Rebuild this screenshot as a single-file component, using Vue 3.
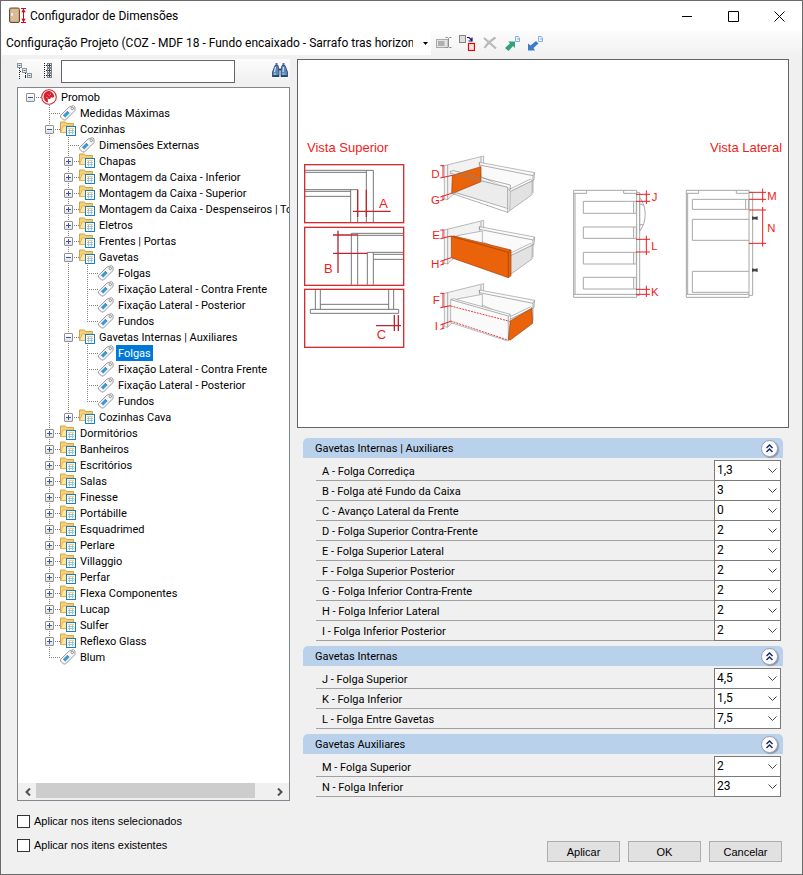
<template>
  <div class="window">
    <header class="titlebar">
      <svg class="app-icon" viewBox="0 0 18 18">
        <rect x="0.5" y="1" width="10" height="14.5" rx="1.5" fill="#c9a980" stroke="#6b4c2c" />
        <rect x="2" y="2" width="7" height="12" fill="#dcc5a4" opacity=".7" />
        <path d="M3 6v3" stroke="#fff" stroke-width="1.4" />
        <path d="M12 1.5h5M12 15.5h5M14.5 2v13" stroke="#e00016" fill="none" />
        <path d="M12.2 5.2 14.5 2l2.3 3.2zM12.2 11.8l2.3 3.2 2.3-3.2z" fill="#e00016" />
      </svg>
      <h1>Configurador de Dimensões</h1>
      <div class="window-buttons">
        <button aria-label="Minimizar"><svg viewBox="0 0 11 11"><path d="M0 5.5h10" /></svg></button>
        <button aria-label="Maximizar"><svg viewBox="0 0 11 11"><path d="M.5.5h10v10H.5z" /></svg></button>
        <button aria-label="Fechar"><svg viewBox="0 0 11 11"><path d="M.5.5l10 10M10.5.5l-10 10" /></svg></button>
      </div>
    </header>

    <div class="toolbar">
      <div class="project">
        <select v-model="project" aria-label="Configuração">
          <option>{{ project }}</option>
        </select>
        <svg class="caret" viewBox="0 0 5 3"><path d="M0 0h5L2.5 3z" /></svg>
      </div>
      <button class="tool" aria-label="Renomear" disabled>
        <svg viewBox="0 0 16 16">
          <rect x=".5" y="4.5" width="11.5" height="8" fill="#e4e4e4" stroke="#a9a9a9" />
          <rect x="2" y="6" width="6.5" height="5" fill="#b0b0b0" />
          <path d="M9.5 2.5h2l1 1 1-1h2M12.5 3.5v8M9.5 12.5h2l1-1 1 1h2" fill="none" stroke="#8c8c8c" />
        </svg>
      </button>
      <button class="tool" aria-label="Copiar">
        <svg viewBox="0 0 16 16">
          <rect x=".5" y=".5" width="6" height="7" fill="#dedede" stroke="#8a8080" />
          <path d="M8 2.5h2l2.5 2.5M13 2.5v3.5H9.5" fill="none" stroke="#10106e" stroke-width="1.2" />
          <rect x="9.5" y="8.5" width="6" height="7" fill="#e6e6e6" stroke="#f00000" stroke-width="1.2" />
        </svg>
      </button>
      <button class="tool" aria-label="Excluir" disabled>
        <svg viewBox="0 0 16 16"><path d="M2 3l12 10.5M13.5 2.5C8 6 5 9 2.5 13" fill="none" stroke="#bababa" stroke-width="2.3" /></svg>
      </button>
      <button class="tool" aria-label="Exportar">
        <svg viewBox="0 0 16 16">
          <path d="M0 13 5 8.3 3 6.5h7V13L8 11l-4.5 5z" fill="#30a27a" />
          <path d="M10.5 1.500h2.700l1.300 1.300v3.700h-4z" fill="#eef5fc" stroke="#86aed6" />
          <path d="M12 4h2" stroke="#86aed6" />
        </svg>
      </button>
      <button class="tool" aria-label="Importar">
        <svg viewBox="0 0 16 16">
          <path d="M8 6l2.5 2.5L5.500 13 7 15.500H0V8.500L2.500 10.500z" fill="#3b7cc9" />
          <path d="M10.5 1.500h2.700l1.300 1.300v3.700h-4z" fill="#eef5fc" stroke="#86aed6" />
          <path d="M12 4h2" stroke="#86aed6" />
        </svg>
      </button>
    </div>

    <main class="content">
      <section class="sidebar">
        <div class="search-bar">
          <button class="tool" aria-label="Recolher tudo">
            <svg viewBox="0 0 16 16">
              <path d="M2.5 5v11M3 8.5h2M8.5 10v5M8 13.5h2" fill="none" stroke="#222" stroke-dasharray="1 1" />
              <g fill="#e9eef2" stroke="#8595a0">
                <rect x=".5" y=".5" width="4" height="4" /><rect x="5.5" y="5.5" width="4" height="4" /><rect x="10.5" y="10.5" width="4" height="4" />
              </g>
              <path d="M1.5 2.5h2M6.5 7.5h2M11.5 12.5h2" stroke="#53636e" />
            </svg>
          </button>
          <button class="tool" aria-label="Expandir tudo">
            <svg viewBox="0 0 16 16">
              <path d="M1.5 0v16M3 2.5h2M3 7.5h2M3 12.5h2" stroke="#222" stroke-dasharray="1 1" />
              <g fill="#e9eef2" stroke="#7d858c">
                <rect x="4.5" y=".5" width="4" height="4" /><rect x="4.5" y="5.5" width="4" height="4" /><rect x="4.5" y="10.5" width="4" height="4" />
              </g>
              <path d="M5 2.5h3M6.5 1v3M5 7.5h3M6.5 6v3M5 12.5h3M6.5 11v3" stroke="#444" />
            </svg>
          </button>
          <input v-model="search" type="text" aria-label="Pesquisar" />
          <button class="tool find" aria-label="Localizar">
            <svg viewBox="0 0 16 16">
              <path d="M3 2.5h3l1 4.500v6.500H.5V9z" fill="#5b86b8" stroke="#1f3f6c" stroke-width=".8" />
              <path d="M10 2.5h3l2.500 6.500v4.500H9V7z" fill="#5b86b8" stroke="#1f3f6c" stroke-width=".8" />
              <path d="M3.5 1h2M10.500 1h2M6.500 6.500h3" stroke="#1f3f6c" stroke-width="1.5" />
              <path d="M3.5 4 2.500 9M11.500 4l-.5 5M2 11h2M10.500 11h2" stroke="#d5e5f5" stroke-width="1.2" />
              <path d="M.5 13h6.500M9 13h6.500" stroke="#203e69" stroke-width="1.5" />
            </svg>
          </button>
        </div>

        <div class="tree">
          <div class="tree-body" role="tree">
            <div v-for="row in rows" :key="row.key" class="tree-row" role="treeitem">
              <span v-for="(line, i) in row.guides" :key="i" :class="['guide', { line }]"></span>
              <span :class="['guide', 'own', { line: row.depth > 0, last: row.last }]">
                <button v-if="row.sign" class="toggle" :aria-label="row.sign === '+' ? 'Expandir' : 'Recolher'">
                  <svg viewBox="0 0 9 9">
                    <path d="M2 4.5h5" /><path v-if="row.sign === '+'" d="M4.5 2v5" />
                  </svg>
                </button>
              </span>
              <svg v-if="row.icon === 'root'" class="node-icon" viewBox="0 0 16 16">
                <circle cx="8" cy="8" r="7.3" fill="#fff" stroke="#d5222c" stroke-width="1.1" />
                <path d="M7.500 2C4.500 2.300 2.500 4.500 2.500 7.500c0 3 1.700 5.200 4.500 6l-.3-4 2.300.8 1-2 2 .5 1.200-1.300C13 4.500 10.500 2 7.500 2z" fill="#d5222c" />
                <path d="M7 5.500 8.500 7M5 8.500h1.500M9.500 4.500v1.500" stroke="#fff" stroke-width=".5" />
              </svg>
              <svg v-else-if="row.icon === 'folder'" class="node-icon" viewBox="0 0 16 16">
                <path d="M.5 11.5V1h5l1 1.500h7v9z" fill="#f6d07a" stroke="#d8a044" />
                <path d="M.7 11.5 3 5h10.500v6.500z" fill="#ffe7a6" stroke="#dfae54" stroke-width=".8" />
                <rect x="6.5" y="5.5" width="9" height="9" fill="#fff" stroke="#1b80b8" />
                <path d="M8 7.5h6" stroke="#f5cf80" />
                <path d="M8 9.5h6M8 11.500h6M9.500 8v5.500M12.500 8v5.500" stroke="#8dbbe0" stroke-width=".8" />
              </svg>
              <svg v-else class="node-icon" viewBox="0 0 16 16">
                <path d="M9 2l4.5-1.300L15 2v3.500L5.500 15h-2L.5 12v-1.500z" fill="#f7f7f7" stroke="#9a9a9a" />
                <circle cx="12.3" cy="3.5" r="1.2" fill="#fff" stroke="#777" stroke-width=".8" />
                <path d="M4.3 11.2 8.3 7.2" stroke="#3a9bd8" stroke-width="3.2" />
                <path d="M3.2 10.1l2.2 2.2M7.2 6.1l2.2 2.2" stroke="#1d699f" stroke-width=".6" />
              </svg>
              <span :class="['node-label', { selected: row.selected }]">{{ row.label }}</span>
            </div>
          </div>
          <div class="scrollbar">
            <button aria-label="Rolar para a esquerda"><svg viewBox="0 0 6 8"><path d="M5 .5 1.5 4 5 7.5" /></svg></button>
            <div class="track"><div class="thumb"></div></div>
            <button aria-label="Rolar para a direita"><svg viewBox="0 0 6 8"><path d="M1 .5 4.5 4 1 7.5" /></svg></button>
          </div>
        </div>

        <div class="checks">
          <label><input v-model="applySelected" type="checkbox" />Aplicar nos itens selecionados</label>
          <label><input v-model="applyExisting" type="checkbox" />Aplicar nos itens existentes</label>
        </div>
      </section>

      <section class="details">
        <div class="preview">
          <svg viewBox="3 3 1470 1101">
            <g transform="translate(0 213)">
              <text x="30" y="66" font-size="39">Vista Superior</text>

              <!-- top view details -->
              <g class="gray">
                <path d="M24 121h205v156M24 127h184M208 121v156M24 179h158v98M24 184h137M24 199h137M161 179v98" />
                <path d="M163 464V310h156M182 310v154M182 316h137M211 464V367h108M229 367v97M229 373h90M229 388h90" />
                <path d="M40 538h265v12H40zM55 479v59M70 479v59M275 479v59M290 479v59M70 523h205" />
              </g>
              <g class="frame">
                <rect x="23" y="104" width="297" height="174" />
                <rect x="23" y="292" width="297" height="174" />
                <rect x="23" y="478" width="297" height="174" />
              </g>
              <g class="dark-red">
                <path d="M168 244h113M182 179v82M208 179v82" />
                <path d="M108 315h74M108 370h103M123 302v127" />
                <path d="M237 587h75M292 555v48M304 555v48" />
              </g>
              <text x="246" y="233" font-size="40">A</text>
              <text x="81" y="430" font-size="39">B</text>
              <text x="239" y="627" font-size="39">C</text>

              <!-- drawer, repeated once per measured part -->
              <g v-for="drawer in drawers" :key="drawer.part" :transform="`translate(0 ${drawer.y})`">
                <path class="shade" d="M442 107 560 78v55L460 200l-8 9-10-2z" />
                <path class="edge" d="M452 105v104M552 82v47" />
                <!-- far wall, floor and right end -->
                <path class="panel" d="M547 97 713 128l-2 22-71 30-88-40z" />
                <path class="floor" d="M470 188 556 148l84 24-4 62z" />
                <path class="edge" d="M547 97v8l161 32v52M713 128l-5 9" />
                <path class="panel-dark" d="M640 184 706 152l-1 42-67 48z" />
                <path class="panel" d="M640 184l-5-5 66-32 5 5z" />
                <template v-if="drawer.part === 'back'">
                  <path class="orange" d="M466 136 552 110v45l-82 34-6 1z" />
                  <path class="edge" d="M460 124l10-2 170 43v15M460 124v6l172 42v76M464 190l168 57 6-5M470 186l164 50" />
                </template>
                <template v-else-if="drawer.part === 'side'">
                  <path class="panel" d="M480 124 556 110v38l-76 30z" />
                  <path class="orange" d="M463 126l8-1 171 42v77l-8 6-171-60z" />
                  <path class="orange-edge" d="M463 126 634 174l8-7M634 174v76" />
                </template>
                <template v-else>
                  <path class="panel" d="M480 124 556 110v38l-76 30z" />
                  <path class="panel" d="M461 126l8-3 171 47v72l-8 8-171-55z" />
                  <path class="edge" d="M461 126 634 175l6-5M634 175v74" />
                  <path class="orange" d="M640 190 704 152l3 45-67 50-6-1z" />
                  <path class="dashed" d="M461 145 638 191M461 190 632 247" />
                </template>
                <path class="measure" :d="drawer.measure" />
              </g>
              <text x="403" y="143" font-size="35">D</text>
              <text x="402" y="222" font-size="35">G</text>
              <text x="406" y="327" font-size="35">E</text>
              <text x="402" y="413" font-size="35">H</text>
              <text x="407" y="523" font-size="35">F</text>
              <text x="413" y="600" font-size="35">I</text>
            </g>

            <g transform="translate(750 213)">
              <text x="489" y="66" font-size="39">Vista Lateral</text>

              <!-- inner drawers cabinet -->
              <g class="cabinet">
                <path d="M80 181h189v321H80zM84 190v303M80 190h39v-9M230 181v9h39M80 493h189M269 187h9v309h-9" />
                <path d="M109 214h159v36H109zM109 291h159v34H109zM109 367h159v35H109zM109 442h159v35H109z" />
                <path d="M260 214v36M260 291v34M260 367v35M260 442v35" />
                <path d="M278 202c22 27 22 75 0 102V202M278 221l11 5M278 284h10" />
              </g>
              <!-- auxiliary drawers cabinet -->
              <g class="cabinet">
                <path d="M418 181h188v321H418zM422 190v303M418 190h37v-9M568 181v9h38M418 493h188M606 187h11v309h-11M606 341h11" />
                <path d="M436 208h169v30H436zM596 208v30M436 268h170M436 268v63h170M436 424h170M436 424v63h170" />
              </g>
              <path d="M615 259l8 2 9-2v11l-9-2-8 2zM615 415l8 2 9-2v11l-9-2-8 2z" fill="#444" />
              <g class="measure">
                <path d="M267 193h42M267 214h42M298 181v41M267 328h42M267 366h42M298 317v58M267 478h42M267 493h42M298 467v34" />
                <path d="M606 187h51M606 208h51M647 176v41M606 240h51M606 340h51M647 231v119" />
              </g>
              <text x="314" y="213" font-size="34">J</text>
              <text x="313" y="361" font-size="34">L</text>
              <text x="312" y="498" font-size="34">K</text>
              <text x="661" y="210" font-size="34">M</text>
              <text x="661" y="306" font-size="34">N</text>
            </g>
          </svg>
        </div>

        <div class="groups">
          <section v-for="(group, g) in groups" :key="group.title" class="group">
            <div class="group-header">
              <h2>{{ group.title }}</h2>
              <button class="collapse" aria-label="Recolher grupo">
                <svg viewBox="0 0 9 9"><path d="M1.5 4 4.5 1l3 3M1.5 8l3-3 3 3" /></svg>
              </button>
            </div>
            <div class="fields">
              <div v-for="(field, f) in group.fields" :key="field.label" class="field">
                <label :for="`field-${g}-${f}`">{{ field.label }}</label>
                <div class="combo">
                  <select :id="`field-${g}-${f}`" v-model="field.value">
                    <option>{{ field.value }}</option>
                  </select>
                  <svg class="chevron" viewBox="0 0 9 5"><path d="M.5.5l4 4 4-4" /></svg>
                </div>
              </div>
            </div>
          </section>
        </div>

        <footer class="actions">
          <button>Aplicar</button>
          <button>OK</button>
          <button>Cancelar</button>
        </footer>
      </section>
    </main>
  </div>
</template>

<script setup>
import { ref, computed } from 'vue'

const project = ref('Configuração Projeto (COZ - MDF 18 - Fundo encaixado - Sarrafo tras horizontal)')
const search = ref('')
const applySelected = ref(false)
const applyExisting = ref(false)

const leaf = (label, selected = false) => ({ label, icon: 'tag', selected })
const folder = (label, children = null) => ({ label, icon: 'folder', sign: children ? '-' : '+', children })

const tree = ref([
  {
    label: 'Promob',
    icon: 'root',
    sign: '-',
    children: [
      leaf('Medidas Máximas'),
      folder('Cozinhas', [
        leaf('Dimensões Externas'),
        folder('Chapas'),
        folder('Montagem da Caixa - Inferior'),
        folder('Montagem da Caixa - Superior'),
        folder('Montagem da Caixa - Despenseiros | To'),
        folder('Eletros'),
        folder('Frentes | Portas'),
        folder('Gavetas', [
          leaf('Folgas'),
          leaf('Fixação Lateral - Contra Frente'),
          leaf('Fixação Lateral - Posterior'),
          leaf('Fundos')
        ]),
        folder('Gavetas Internas | Auxiliares', [
          leaf('Folgas', true),
          leaf('Fixação Lateral - Contra Frente'),
          leaf('Fixação Lateral - Posterior'),
          leaf('Fundos')
        ]),
        folder('Cozinhas Cava')
      ]),
      folder('Dormitórios'),
      folder('Banheiros'),
      folder('Escritórios'),
      folder('Salas'),
      folder('Finesse'),
      folder('Portábille'),
      folder('Esquadrimed'),
      folder('Perlare'),
      folder('Villaggio'),
      folder('Perfar'),
      folder('Flexa Componentes'),
      folder('Lucap'),
      folder('Sulfer'),
      folder('Reflexo Glass'),
      leaf('Blum')
    ]
  }
])

// guides: one entry per ancestor, true while that ancestor still has siblings below
const flatten = (nodes, depth = 0, guides = [], path = '') =>
  nodes.flatMap((node, i) => {
    const last = i === nodes.length - 1
    const key = `${path}/${i}`
    const row = { ...node, key, depth, guides, last }
    return [row, ...flatten(node.children || [], depth + 1, [...guides, !last], key)]
  })

const rows = computed(() => flatten(tree.value))

const drawers = [
  { part: 'back', y: 0, measure: 'M438 107v37M430 107h12M430 144l36-8M438 196v15M430 201l34-11M430 212l12-4' },
  { part: 'side', y: 193, measure: 'M438 107v26M430 107h12M430 133l33-8M438 197v15M430 201l33-11M430 212l12-4' },
  { part: 'front', y: 383, measure: 'M438 107v43M430 107h12M430 150l31-6M438 197v17M430 202l31-11M430 215l12-4' }
]

const groups = ref([
  {
    title: 'Gavetas Internas | Auxiliares',
    fields: [
      { label: 'A - Folga Corrediça', value: '1,3' },
      { label: 'B - Folga até Fundo da Caixa', value: '3' },
      { label: 'C - Avanço Lateral da Frente', value: '0' },
      { label: 'D - Folga Superior Contra-Frente', value: '2' },
      { label: 'E - Folga Superior Lateral', value: '2' },
      { label: 'F - Folga Superior Posterior', value: '2' },
      { label: 'G - Folga Inferior Contra-Frente', value: '2' },
      { label: 'H - Folga Inferior Lateral', value: '2' },
      { label: 'I - Folga Inferior Posterior', value: '2' }
    ]
  },
  {
    title: 'Gavetas Internas',
    fields: [
      { label: 'J - Folga Superior', value: '4,5' },
      { label: 'K - Folga Inferior', value: '1,5' },
      { label: 'L - Folga Entre Gavetas', value: '7,5' }
    ]
  },
  {
    title: 'Gavetas Auxiliares',
    fields: [
      { label: 'M - Folga Superior', value: '2' },
      { label: 'N - Folga Inferior', value: '23' }
    ]
  }
])
</script>

<style>
body {
  margin: 0;
}
</style>

<style scoped>
.window {
  box-sizing: border-box;
  min-height: 100vh;
  display: flex;
  flex-direction: column;
  border: 1px solid #6a6a6a;
  background: #f0f0f0;
  color: #000;
  font: 11px/16px Roboto, "Liberation Sans", Arial, sans-serif;
}

button,
input,
select {
  font: inherit;
  color: inherit;
  margin: 0;
  padding: 0;
  border-radius: 0;
}

svg {
  display: block;
}

/* title bar */
.titlebar {
  display: flex;
  align-items: center;
  height: 30px;
  padding-left: 8px;
  background: #fff;
}

.app-icon {
  width: 18px;
  height: 18px;
  margin-right: 3px;
}

h1 {
  margin: 0;
  font: 12px/16px Roboto, "Open Sans", sans-serif;
}

.window-buttons {
  display: flex;
  align-self: stretch;
  margin-left: auto;
}

.window-buttons button {
  display: grid;
  place-items: center;
  width: 46px;
  border: 0;
  background: none;
}

.window-buttons svg {
  width: 11px;
  height: 11px;
  fill: none;
  stroke: #000;
}

/* toolbars */
.toolbar {
  display: flex;
  align-items: center;
  gap: 7px;
  height: 24px;
  padding: 0 4px 4px 1px;
  background: linear-gradient(#fcfcfc, #f0f0f0);
}

.project {
  position: relative;
  flex: 0 1 429px;
  min-width: 0;
  margin-right: -2px;
}

.project select {
  appearance: none;
  width: 100%;
  height: 24px;
  padding: 0 18px 0 4px;
  border: 0;
  background: #fff;
  font: 12px/16px Roboto, "Open Sans", sans-serif;
}

.caret {
  position: absolute;
  right: 3px;
  top: 11px;
  width: 5px;
  height: 3px;
}

.tool {
  flex: none;
  width: 16px;
  height: 16px;
  border: 0;
  background: none;
}

.tool svg {
  width: 16px;
  height: 16px;
}

/* content */
.content {
  flex: 1;
  display: grid;
  grid-template-columns: 273px minmax(0, 1fr);
  gap: 7px;
  padding: 0 13px 0 16px;
}

.sidebar {
  display: flex;
  flex-direction: column;
}

.search-bar {
  display: flex;
  align-items: center;
  gap: 10px;
  height: 24px;
  margin-bottom: 4px;
  padding-right: 2px;
  background: linear-gradient(#fcfcfc, #f0f0f0);
}

.search-bar input {
  box-sizing: border-box;
  width: 174px;
  height: 23px;
  margin-left: -8px;
  padding: 0 4px;
  border: 1px solid #646464;
  background: #fff;
}

.find {
  margin-left: auto;
}

.tree {
  flex: 1;
  display: flex;
  flex-direction: column;
  border: 1px solid #828790;
  background: #fff;
}

.tree-body {
  flex: 1;
  padding: 1px 0 0 3px;
  overflow: hidden;
}

.tree-row {
  display: flex;
  height: 16px;
  white-space: nowrap;
}

.guide {
  position: relative;
  flex: none;
  width: 19px;
}

.guide.line::before {
  content: "";
  position: absolute;
  left: 9px;
  top: 0;
  bottom: 0;
  width: 1px;
  background: repeating-linear-gradient(#808080 0 1px, transparent 1px 2px);
}

.guide.own.last::before {
  bottom: 7px;
}

.guide.own::after {
  content: "";
  position: absolute;
  left: 9px;
  right: -1px;
  top: 8px;
  height: 1px;
  background: repeating-linear-gradient(90deg, #808080 0 1px, transparent 1px 2px);
}

.toggle {
  position: absolute;
  z-index: 1;
  left: 5px;
  top: 4px;
  box-sizing: border-box;
  width: 9px;
  height: 9px;
  border: 1px solid #919191;
  border-radius: 1px;
  background: linear-gradient(#fff, #e2e2e2);
}

.toggle svg {
  width: 9px;
  height: 9px;
  margin: -1px;
  stroke: #3b55a3;
}

.node-icon {
  flex: none;
  width: 16px;
  height: 16px;
  margin: 0 2px 0 1px;
}

.node-label {
  padding: 0 2px;
  line-height: 18px;
}

.node-label.selected {
  background: #0078d7;
  color: #fff;
}

.scrollbar {
  display: flex;
  height: 17px;
  padding: 0 1px;
  background: #f0f0f0;
}

.scrollbar button {
  display: grid;
  place-items: center;
  width: 17px;
  border: 0;
  background: none;
}

.scrollbar svg {
  width: 6px;
  height: 8px;
  fill: none;
  stroke: #505050;
  stroke-width: 2;
}

.track {
  flex: 1;
}

.thumb {
  width: 93%;
  height: 15px;
  background: #cdcdcd;
}

.checks {
  display: flex;
  flex-direction: column;
  gap: 8px;
  padding: 12px 0 21px;
  font-family: "Liberation Sans", Arial, sans-serif;
}

.checks label {
  display: flex;
  align-items: center;
  gap: 4px;
}

.checks input {
  appearance: none;
  box-sizing: border-box;
  width: 13px;
  height: 13px;
  border: 1px solid #333;
  background: #fff;
}

/* right side */
.details {
  display: flex;
  flex-direction: column;
}

.preview {
  border: 1px solid #646464;
  background: #fff;
}

.preview svg {
  width: 100%;
}

.preview text {
  font-family: "Liberation Sans", Arial, sans-serif;
  fill: #f01c20;
}

.gray,
.edge {
  fill: none;
  stroke: #888;
  stroke-width: 2;
}

.gray {
  stroke: #777;
  stroke-width: 3;
}

.cabinet {
  fill: none;
  stroke: #a8a8a8;
  stroke-width: 3;
}

.frame {
  fill: none;
  stroke: #d52a2e;
  stroke-width: 4;
}

.dark-red {
  fill: none;
  stroke: #bd2630;
  stroke-width: 4;
}

.measure {
  fill: none;
  stroke: #f01c20;
  stroke-width: 3;
}

.dashed {
  fill: none;
  stroke: #e04040;
  stroke-width: 3;
  stroke-dasharray: 6 3;
}

.shade,
.panel,
.floor,
.panel-dark {
  fill: #f2f2f2;
  stroke: #999;
  stroke-width: 2;
}

.panel {
  fill: #fafafa;
}

.floor {
  fill: #ececec;
  stroke: none;
}

.panel-dark {
  fill: #e2e2e2;
}

.orange {
  fill: #ea6209;
  stroke: #9c4610;
  stroke-width: 2;
}

.orange-edge {
  fill: none;
  stroke: #963d00;
  stroke-width: 2;
}

.groups {
  display: flex;
  flex-direction: column;
  gap: 5px;
  padding: 10px 6px;
}

.group-header {
  display: flex;
  align-items: center;
  justify-content: space-between;
  height: 20px;
  margin-bottom: 3px;
  padding: 0 5px 0 12px;
  border-radius: 5px 5px 0 0;
  background: #b9d1ea;
}

h2 {
  margin: 0;
  padding-top: 2px;
  font-size: 11px;
  font-weight: 400;
}

.collapse {
  display: grid;
  place-items: center;
  width: 17px;
  height: 17px;
  border: 1px solid #9a9fb5;
  border-radius: 50%;
  background: #fff;
  box-shadow: 1px 1px 1px #8c93a8;
}

.collapse svg {
  width: 9px;
  height: 9px;
  fill: none;
  stroke: #1f2f66;
  stroke-width: 1.5;
}

.fields {
  padding: 0 2px 0 13px;
}

.field {
  box-sizing: border-box;
  display: flex;
  align-items: center;
  height: 20px;
  padding-left: 6px;
  border-bottom: 1px solid #a0a0a0;
}

.field label {
  flex: 1;
  padding-top: 2px;
}

.combo {
  position: relative;
  width: 67px;
  height: 21px;
}

.combo select {
  appearance: none;
  box-sizing: border-box;
  width: 100%;
  height: 21px;
  padding: 0 16px 2px 2px;
  border: 1px solid #7a7a7a;
  background: #fff;
  font-size: 12px;
}

.chevron {
  position: absolute;
  right: 4px;
  top: 8px;
  width: 9px;
  height: 5px;
  fill: none;
  stroke: #444;
  pointer-events: none;
}

.actions {
  display: flex;
  justify-content: flex-end;
  gap: 8px;
  margin-top: auto;
  padding: 0 7px 12px 0;
}

.actions button {
  box-sizing: border-box;
  width: 73px;
  height: 21px;
  border: 1px solid #adadad;
  background: #e1e1e1;
  font-family: "Liberation Sans", Arial, sans-serif;
}
</style>
